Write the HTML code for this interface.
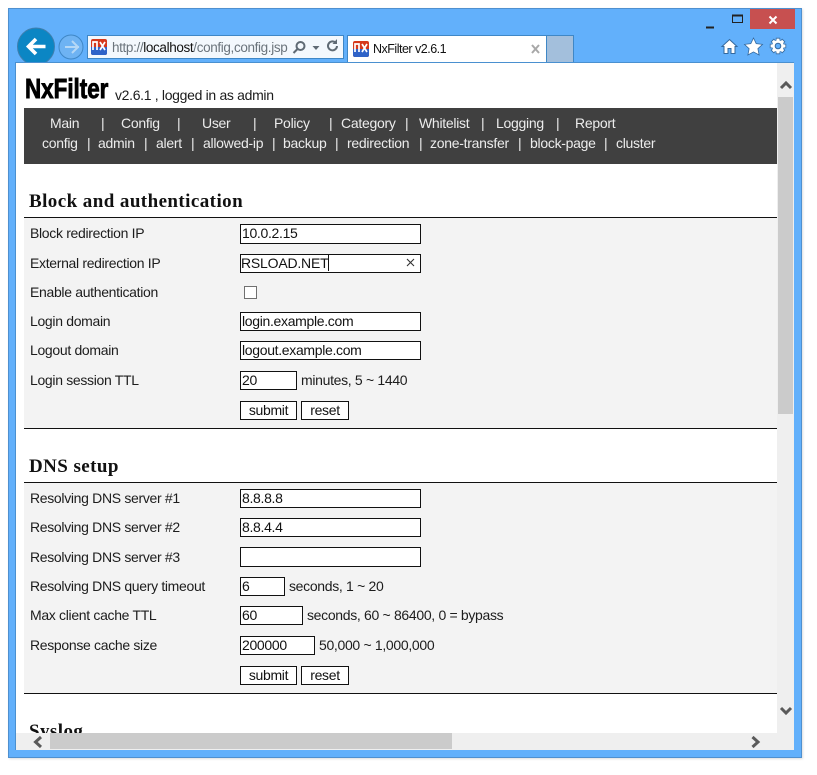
<!DOCTYPE html>
<html><head><meta charset="utf-8">
<style>
html,body{margin:0;padding:0;background:#fff;width:817px;height:775px;overflow:hidden}
body{position:relative;font-family:"Liberation Sans",Arial,sans-serif;font-size:14px;color:#1a1a1a}
.a,.t,.n,.i,.b,.hd{position:absolute}
.t,.n,.i,.b,.hd{white-space:pre;line-height:16px}
.t,.i,.b{letter-spacing:-.32px}
.n{color:#ececec;letter-spacing:-.28px;margin-top:-1px}
.t{color:#1c1c1c;height:16px}
.i{box-sizing:border-box;height:20px;border:1px solid #111;background:#fff;color:#111;padding:0 0 0 1px;line-height:17px;left:240px}
.b{box-sizing:border-box;height:19px;border:1px solid #111;background:#fff;color:#111;text-align:center;line-height:17px}
.hd{font-family:"Liberation Serif",serif;font-weight:bold;font-size:19px;color:#111;left:29px;line-height:22px;letter-spacing:.43px}
</style></head>
<body>
<div class="a" style="left:8px;top:8px;width:792px;height:748px;background:#62b0fb;border:1px solid #4f90cf;box-shadow:1px 1px 2px #ddd"></div>
<div class="a" style="left:15px;top:62px;width:779px;height:688px;background:#fff;border:1px solid #4a90d0;box-sizing:border-box;border-width:1px 0 0 1px"></div>
<div class="a" style="left:750px;top:9px;width:45px;height:20px;background:#c75050"></div>
<svg class="a" style="left:0;top:0" width="817" height="62" viewBox="0 0 817 62">
 <path d="M706 27.5h8" stroke="#222" stroke-width="2"/>
 <rect x="732.5" y="15.5" width="10" height="7" fill="none" stroke="#222" stroke-width="1"/><path d="M732 15.5h11" stroke="#222" stroke-width="2"/>
 <path d="M769.500 16.500l7 7M776.500 16.500l-7 7" stroke="#fff" stroke-width="2"/>
 <circle cx="36" cy="46.5" r="18.5" fill="#0b86c4" stroke="#3f7fae"/>
 <path d="M45.500 46.500H29M36 39l-7.500 7.500 7.500 7.500" fill="none" stroke="#fff" stroke-width="3.600"/>
 <circle cx="71" cy="47" r="12" fill="#6eb3f3" stroke="#3f87c6"/>
 <path d="M79 47H65M72 41l6 6-6 6" fill="none" stroke="#b5d8f6" stroke-width="2"/>
 <rect x="87.500" y="35.500" width="256" height="23" fill="#f3f8fd" stroke="#3f87c6"/>
 <rect x="91" y="39" width="16" height="16" rx="2" fill="#d6391c"/><path d="M91 47h16v6a2 2 0 0 1-2 2H93a2 2 0 0 1-2-2z" fill="#2f63c8"/>
 <path d="M93 50v-8h4v8M94 42h2M100 42l5 8M105 42l-5 8" fill="none" stroke="#fff" stroke-width="1.700"/>
 <circle cx="300.500" cy="46" r="4" fill="none" stroke="#5f6a74" stroke-width="2"/><path d="M297.500 49l-4 4" stroke="#5f6a74" stroke-width="2"/>
 <path d="M312.500 46h7l-3.500 4z" fill="#5f6a74"/>
 <path d="M337 46a4.500 4.500 0 1 1-1.500-3.500" fill="none" stroke="#5f6a74" stroke-width="2"/><path d="M337 39v5h-4.500z" fill="#5f6a74"/>
 <rect x="347.500" y="35.500" width="199" height="27" fill="#fff" stroke="#3f87c6"/>
 <rect x="546.500" y="35.500" width="27" height="27" fill="#a3bfdc" stroke="#3f87c6"/>
 <rect x="353" y="41" width="16" height="16" rx="2" fill="#d6391c"/><path d="M353 49h16v6a2 2 0 0 1-2 2h-12a2 2 0 0 1-2-2z" fill="#2f63c8"/>
 <path d="M355 52v-8h4v8M356 44h2M362 44l5 8M367 44l-5 8" fill="none" stroke="#fff" stroke-width="1.700"/>
 <path d="M532 45l7 8M539 45l-7 8" stroke="#a8a8a8" stroke-width="2"/>
 <path d="M729.500 39.500l7.500 7h-2v7h-4v-5h-3v5h-4v-7h-2z" fill="#fff" stroke="#33689e"/>
 <path d="M753.500 38l2.700 5.600 6.300.8-4.600 4.300 1.200 6.300-5.600-3.100-5.600 3.100 1.200-6.300-4.600-4.300 6.300-.8z" fill="#fff" stroke="#33689e" stroke-width=".8"/>
 <g transform="translate(778 46)">
  <g id="gt" stroke="#33689e" stroke-width="4.400">
   <path d="M0-8.200V8.200M-8.200 0H8.200M-5.800-5.800L5.800 5.800M-5.800 5.800L5.800-5.800"/>
  </g>
  <path d="M0-7.400V7.400M-7.400 0H7.400M-5.200-5.200L5.200 5.200M-5.200 5.200L5.200-5.200" stroke="#fff" stroke-width="3"/>
  <circle r="5.300" fill="#fff" stroke="#fff"/>
  <circle r="2.800" fill="#62b0fb" stroke="#33689e"/>
 </g>
</svg>
<div class="a" style="left:112px;top:39px;font-size:13.5px;line-height:17px;color:#6b747c;white-space:pre;letter-spacing:-.36px">http://<span style="color:#111">localhost</span>/config,config.jsp</div>
<div class="a" style="left:373px;top:41px;font-size:12.5px;line-height:17px;color:#111;white-space:pre;letter-spacing:-.5px">NxFilter v2.6.1</div>

<div class="a" style="left:25px;top:72px;font-family:'Liberation Sans',sans-serif;font-weight:bold;font-size:28px;line-height:33px;color:#000;white-space:pre;transform:scaleX(.8);transform-origin:0 0;-webkit-text-stroke:.9px #000">NxFilter</div>
<div class="t" style="left:115px;top:87px">v2.6.1 , logged in as admin</div>

<div class="a" style="left:24px;top:108px;width:753px;height:56px;background:#404040"></div>
<div class="n" style="left:50px;top:116px">Main</div><div class="n" style="left:101px;top:116px">|</div>
<div class="n" style="left:121px;top:116px">Config</div><div class="n" style="left:177px;top:116px">|</div>
<div class="n" style="left:202px;top:116px">User</div><div class="n" style="left:253px;top:116px">|</div>
<div class="n" style="left:274px;top:116px">Policy</div><div class="n" style="left:329px;top:116px">|</div>
<div class="n" style="left:341px;top:116px">Category</div><div class="n" style="left:405px;top:116px">|</div>
<div class="n" style="left:419px;top:116px">Whitelist</div><div class="n" style="left:481px;top:116px">|</div>
<div class="n" style="left:496px;top:116px">Logging</div><div class="n" style="left:556px;top:116px">|</div>
<div class="n" style="left:575px;top:116px">Report</div>
<div class="n" style="left:42px;top:136px">config</div><div class="n" style="left:87px;top:136px">|</div>
<div class="n" style="left:98px;top:136px">admin</div><div class="n" style="left:144px;top:136px">|</div>
<div class="n" style="left:156px;top:136px">alert</div><div class="n" style="left:191px;top:136px">|</div>
<div class="n" style="left:203px;top:136px">allowed-ip</div><div class="n" style="left:272px;top:136px">|</div>
<div class="n" style="left:283px;top:136px">backup</div><div class="n" style="left:335px;top:136px">|</div>
<div class="n" style="left:347px;top:136px">redirection</div><div class="n" style="left:419px;top:136px">|</div>
<div class="n" style="left:430px;top:136px">zone-transfer</div><div class="n" style="left:518px;top:136px">|</div>
<div class="n" style="left:530px;top:136px">block-page</div><div class="n" style="left:604px;top:136px">|</div>
<div class="n" style="left:616px;top:136px">cluster</div>

<div class="hd" style="top:191px">Block and authentication</div>
<div class="a" style="left:24px;top:217px;width:753px;height:212px;background:#f3f3f3;border-top:1px solid #111;border-bottom:1px solid #111;box-sizing:border-box"></div>
<div class="t" style="left:30px;top:225px">Block redirection IP</div>
<div class="i" style="top:224px;width:181px">10.0.2.15</div>
<div class="t" style="left:30px;top:255px">External redirection IP</div>
<div class="i" style="top:254px;width:181px;height:19px;line-height:17px;padding-left:0;letter-spacing:-.2px">RSLOAD.NET<span style="display:inline-block;width:1px;height:16px;background:#111;vertical-align:-3px"></span></div>
<svg class="a" style="left:406px;top:258px" width="10" height="10"><path d="M1 1l7 7M8 1l-7 7" stroke="#333" stroke-width="1.100"/></svg>
<div class="t" style="left:30px;top:284px">Enable authentication</div>
<div class="a" style="left:244px;top:286px;width:13px;height:13px;box-sizing:border-box;border:1px solid #707070;background:#fff"></div>
<div class="t" style="left:30px;top:313px">Login domain</div>
<div class="i" style="top:312px;width:181px;height:19px">login.example.com</div>
<div class="t" style="left:30px;top:342px">Logout domain</div>
<div class="i" style="top:341px;width:181px;height:19px">logout.example.com</div>
<div class="t" style="left:30px;top:372px">Login session TTL</div>
<div class="i" style="top:371px;width:57px;height:19px">20</div>
<div class="t" style="left:301px;top:372px">minutes, 5 ~ 1440</div>
<div class="b" style="left:240px;top:401px;width:57px">submit</div>
<div class="b" style="left:301px;top:401px;width:48px">reset</div>

<div class="hd" style="top:456px">DNS setup</div>
<div class="a" style="left:24px;top:482px;width:753px;height:212px;background:#f3f3f3;border-top:1px solid #111;border-bottom:1px solid #111;box-sizing:border-box"></div>
<div class="t" style="left:30px;top:490px">Resolving DNS server #1</div>
<div class="i" style="top:489px;width:181px;height:19px">8.8.8.8</div>
<div class="t" style="left:30px;top:519px">Resolving DNS server #2</div>
<div class="i" style="top:518px;width:181px;height:19px">8.8.4.4</div>
<div class="t" style="left:30px;top:549px">Resolving DNS server #3</div>
<div class="i" style="top:547px;width:181px;height:20px"></div>
<div class="t" style="left:30px;top:578px">Resolving DNS query timeout</div>
<div class="i" style="top:577px;width:45px;height:19px">6</div>
<div class="t" style="left:289px;top:578px">seconds, 1 ~ 20</div>
<div class="t" style="left:30px;top:607px">Max client cache TTL</div>
<div class="i" style="top:606px;width:63px;height:19px">60</div>
<div class="t" style="left:307px;top:607px">seconds, 60 ~ 86400, 0 = bypass</div>
<div class="t" style="left:30px;top:637px">Response cache size</div>
<div class="i" style="top:636px;width:75px;height:19px">200000</div>
<div class="t" style="left:319px;top:637px">50,000 ~ 1,000,000</div>
<div class="b" style="left:240px;top:666px;width:57px">submit</div>
<div class="b" style="left:301px;top:666px;width:48px">reset</div>

<div class="hd" style="top:721px">Syslog</div>

<div class="a" style="left:16px;top:733px;width:778px;height:17px;background:#efefef"></div>
<div class="a" style="left:50px;top:733px;width:402px;height:16px;background:#cbcbcb"></div>
<div class="a" style="left:777px;top:63px;width:17px;height:670px;background:#efefef"></div>
<div class="a" style="left:778px;top:97px;width:15px;height:317px;background:#cbcbcb"></div>
<svg class="a" style="left:0;top:0" width="817" height="775">
 <path d="M781 88l5-5 5 5M781 708l5 5 5-5M41 737l-5.500 5 5.500 5M752.500 737l5.500 5-5.500 5" fill="none" stroke="#5a5a5a" stroke-width="3"/>
</svg>
</body></html>
